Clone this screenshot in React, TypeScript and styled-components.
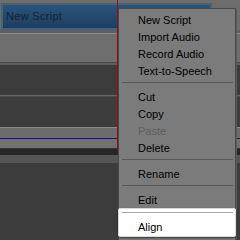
import React from 'react';
import styled, { createGlobalStyle } from 'styled-components';

const GlobalStyle = createGlobalStyle`
  html, body {
    margin: 0;
    padding: 0;
    background: #3c3c3c;
  }
  body {
    font-family: "Liberation Sans", Arial, sans-serif;
    font-size: 11px;
  }
`;

// --- 배경 타임라인 ---
const Stage = styled.div`
  position: relative;
  width: 240px;
  height: 240px;
  overflow: hidden;
  background: #3c3c3c;
`;

const Band = styled.div<{ $h: number; $bg: string }>`
  height: ${({ $h }) => $h}px;
  background: ${({ $bg }) => $bg};
`;

const TrackRow = styled.div`
  height: 27px;
  background: #6c6c6c;
  padding-left: 1px;
  box-sizing: border-box;
`;

const Clip = styled.div`
  width: 211px;
  height: 27px;
  box-sizing: border-box;
  border: 1px solid #4c5f72;
  box-shadow: inset 0 0 0 1px #3f6588;
  background: linear-gradient(#2b557c, #1d3d5e);
  color: #162231;
  letter-spacing: 0.3px;
  padding: 7px 0 0 4px;
  line-height: 11px;
`;

const Playhead = styled.div`
  position: absolute;
  left: 117px;
  top: 0;
  width: 1px;
  height: 150px;
  background: #8a1010;
`;

// --- 컨텍스트 메뉴 ---
const Menu = styled.div`
  position: absolute;
  left: 118px;
  top: 8px;
  width: 118px;
  box-sizing: border-box;
  border: 1px solid #4a4a4a;
  background: #7b7b7b;
  padding: 2px 0 10px;
  box-shadow: 1px 1px 0 #5a5a5a;
`;

const Item = styled.div<{ $disabled?: boolean }>`
  height: 17px;
  line-height: 17px;
  padding-left: 19px;
  padding-top: 1px;
  box-sizing: border-box;
  color: ${({ $disabled }) => ($disabled ? '#5e5e5e' : '#000')};
  white-space: nowrap;
`;

const Separator = styled.div`
  height: 9px;
  padding: 3px 2px 0 3px;
  box-sizing: border-box;
  &::after {
    content: '';
    display: block;
    height: 1px;
    background: #585858;
  }
`;

const Highlight = styled.div`
  margin: 0 -1px;
  padding: 1px 1px 2px;
  background: #fff;
  border-radius: 3px;
  box-shadow: 0 1px 2px rgba(0, 0, 0, 0.55), inset 0 0 0 1px #d8d8d8;
  ${Separator}::after {
    background: #a8a8a8;
  }
`;

const App = () => {
  return (
    <Stage>
      <GlobalStyle />
      <Band $h={3} $bg="#6e6e6e" />
      <TrackRow>
        <Clip>New Script</Clip>
      </TrackRow>
      <Band $h={3} $bg="#5f5f5f" />
      <Band $h={1} $bg="#8c8c8c" />
      <Band $h={28} $bg="#6e6e6e" />
      <Band $h={1} $bg="#4a4a4a" />
      <Band $h={2} $bg="#5e5e5e" />
      <Band $h={30} $bg="#3c3c3c" />
      <Band $h={1} $bg="#676767" />
      <Band $h={1} $bg="#4a4a4a" />
      <Band $h={30} $bg="#3d3d3d" />
      <Band $h={1} $bg="#8a8a8a" />
      <Band $h={10} $bg="#6c6c6c" />
      <Band $h={1} $bg="#1e1e44" />
      <Band $h={9} $bg="#717171" />
      <Band $h={1} $bg="#333" />
      <Band $h={6} $bg="#262626" />
      <Band $h={8} $bg="#555" />
      <Playhead />

      <Menu>
        <Item>New Script</Item>
        <Item>Import Audio</Item>
        <Item>Record Audio</Item>
        <Item>Text-to-Speech</Item>
        <Separator />
        <Item>Cut</Item>
        <Item>Copy</Item>
        <Item $disabled>Paste</Item>
        <Item>Delete</Item>
        <Separator />
        <Item>Rename</Item>
        <Separator />
        <Item>Edit</Item>
        <Highlight>
          <Separator />
          <Item>Align</Item>
        </Highlight>
      </Menu>
    </Stage>
  );
};

export default App;
